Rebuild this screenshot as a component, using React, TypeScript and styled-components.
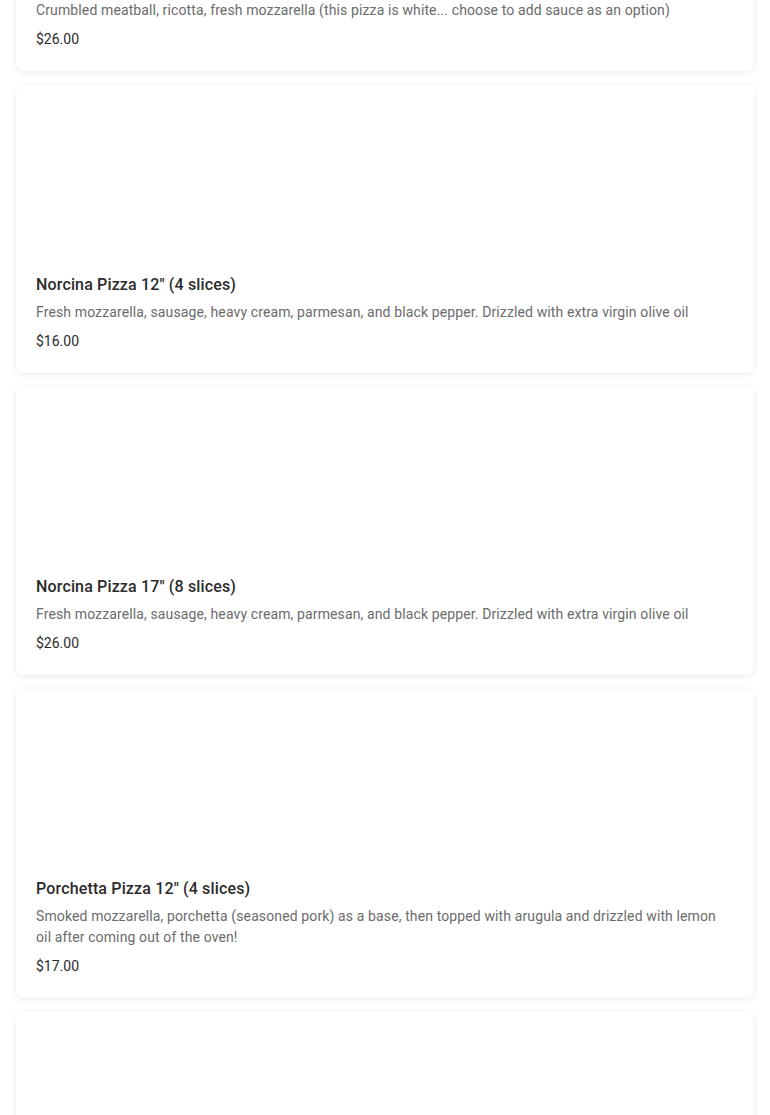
import React from "react";
import styled, { createGlobalStyle } from "styled-components";

const Global = createGlobalStyle`
  html, body { margin: 0; padding: 0; background: #ffffff; }
  body { font-family: Roboto, "Noto Sans", sans-serif; overflow: hidden; }
`;

const List = styled.div`
  display: flex;
  flex-direction: column;
  gap: 14px;
  padding: 0 16px;
  margin-top: -217px;
`;

const Card = styled.div`
  background: #fff;
  border-radius: 8px;
  box-shadow: 0 1px 6px rgba(0, 0, 0, 0.09);
  display: flex;
  flex-direction: column;
  overflow: hidden;
`;

const Photo = styled.div`
  height: 168px;
  background: #fff;
`;

const Body = styled.div`
  padding: 20px 20px 21px;
  display: flex;
  flex-direction: column;
`;

const Title = styled.div`
  font-size: 16px;
  line-height: 24px;
  font-weight: 500;
  letter-spacing: 0.15px;
  color: #2b2b2b;
  margin-bottom: 5px;
`;

const Desc = styled.div`
  font-size: 14px;
  line-height: 21px;
  letter-spacing: 0.12px;
  color: #6b6b6b;
  margin-bottom: 8px;
`;

const Price = styled.div`
  font-size: 14px;
  line-height: 21px;
  color: #2b2b2b;
`;

const items = [
  {
    title: 'Meatball Pizza 17" (8 slices)',
    desc: "Crumbled meatball, ricotta, fresh mozzarella (this pizza is white... choose to add sauce as an option)",
    price: "$26.00",
  },
  {
    title: 'Norcina Pizza 12" (4 slices)',
    desc: "Fresh mozzarella, sausage, heavy cream, parmesan, and black pepper. Drizzled with extra virgin olive oil",
    price: "$16.00",
  },
  {
    title: 'Norcina Pizza 17" (8 slices)',
    desc: "Fresh mozzarella, sausage, heavy cream, parmesan, and black pepper. Drizzled with extra virgin olive oil",
    price: "$26.00",
  },
  {
    title: 'Porchetta Pizza 12" (4 slices)',
    desc: "Smoked mozzarella, porchetta (seasoned pork) as a base, then topped with arugula and drizzled with lemon oil after coming out of the oven!",
    price: "$17.00",
  },
  {
    title: 'Porchetta Pizza 17" (8 slices)',
    desc: "Smoked mozzarella, porchetta (seasoned pork) as a base, then topped with arugula and drizzled with lemon oil after coming out of the oven!",
    price: "$26.00",
  },
];

export default function App() {
  return (
    <>
      <Global />
      <List>
        {items.map((it, i) => (
          <Card key={i}>
            <Photo />
            <Body>
              <Title>{it.title}</Title>
              <Desc>{it.desc}</Desc>
              <Price>{it.price}</Price>
            </Body>
          </Card>
        ))}
      </List>
    </>
  );
}
